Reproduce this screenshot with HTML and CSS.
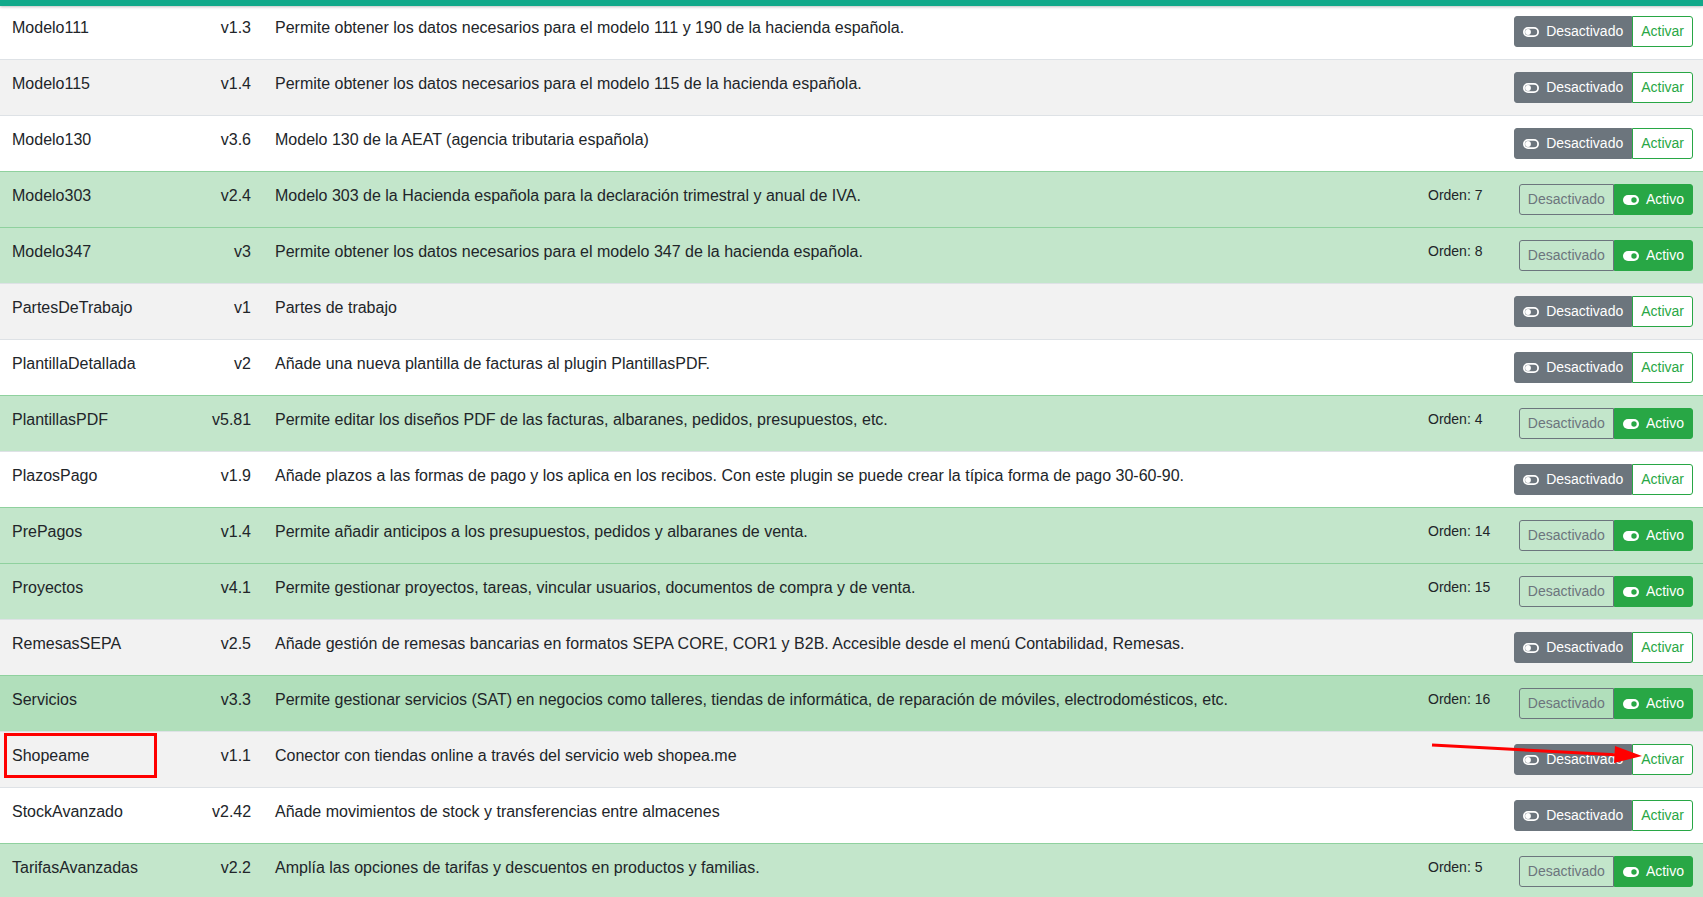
FILE: index.html
```html
<!DOCTYPE html>
<html lang="es">
<head>
    <meta charset="UTF-8">
    <meta name="viewport" content="width=device-width, initial-scale=1.0">
    <title>Plugins</title>
    <link rel="stylesheet" href="styles.css">
</head>
<body>

    <div class="topbar"></div>

    <div class="content">
        <table class="plugins">
            <colgroup>
                <col class="col-name">
                <col class="col-version">
                <col>
                <col class="col-order">
                <col class="col-actions">
            </colgroup>
            <tbody>
                <tr>
                    <td>Modelo111</td>
                    <td class="version">v1.3</td>
                    <td>Permite obtener los datos necesarios para el modelo 111 y 190 de la hacienda española.</td>
                    <td class="order"></td>
                    <td class="actions">
                        <div class="btn-group">
                            <span class="btn btn-secondary"><svg class="toggle" viewBox="0 0 16 10"><rect x="0.9" y="0.9" width="14.2" height="8.2" rx="4.1" fill="none" stroke="#fff" stroke-width="1.8"/><circle cx="5" cy="5" r="2.9" fill="#fff"/></svg>Desactivado</span>
                            <span class="btn btn-outline-success">Activar</span>
                        </div>
                    </td>
                </tr>
                <tr class="striped">
                    <td>Modelo115</td>
                    <td class="version">v1.4</td>
                    <td>Permite obtener los datos necesarios para el modelo 115 de la hacienda española.</td>
                    <td class="order"></td>
                    <td class="actions">
                        <div class="btn-group">
                            <span class="btn btn-secondary"><svg class="toggle" viewBox="0 0 16 10"><rect x="0.9" y="0.9" width="14.2" height="8.2" rx="4.1" fill="none" stroke="#fff" stroke-width="1.8"/><circle cx="5" cy="5" r="2.9" fill="#fff"/></svg>Desactivado</span>
                            <span class="btn btn-outline-success">Activar</span>
                        </div>
                    </td>
                </tr>
                <tr>
                    <td>Modelo130</td>
                    <td class="version">v3.6</td>
                    <td>Modelo 130 de la AEAT (agencia tributaria española)</td>
                    <td class="order"></td>
                    <td class="actions">
                        <div class="btn-group">
                            <span class="btn btn-secondary"><svg class="toggle" viewBox="0 0 16 10"><rect x="0.9" y="0.9" width="14.2" height="8.2" rx="4.1" fill="none" stroke="#fff" stroke-width="1.8"/><circle cx="5" cy="5" r="2.9" fill="#fff"/></svg>Desactivado</span>
                            <span class="btn btn-outline-success">Activar</span>
                        </div>
                    </td>
                </tr>
                <tr class="enabled">
                    <td>Modelo303</td>
                    <td class="version">v2.4</td>
                    <td>Modelo 303 de la Hacienda española para la declaración trimestral y anual de IVA.</td>
                    <td class="order">Orden: 7</td>
                    <td class="actions">
                        <div class="btn-group">
                            <span class="btn btn-outline-secondary">Desactivado</span>
                            <span class="btn btn-success"><svg class="toggle" viewBox="0 0 16 10"><rect x="0" y="0" width="16" height="10" rx="5" fill="#fff"/><circle cx="11" cy="5" r="2.7" fill="#28a745"/></svg>Activo</span>
                        </div>
                    </td>
                </tr>
                <tr class="enabled">
                    <td>Modelo347</td>
                    <td class="version">v3</td>
                    <td>Permite obtener los datos necesarios para el modelo 347 de la hacienda española.</td>
                    <td class="order">Orden: 8</td>
                    <td class="actions">
                        <div class="btn-group">
                            <span class="btn btn-outline-secondary">Desactivado</span>
                            <span class="btn btn-success"><svg class="toggle" viewBox="0 0 16 10"><rect x="0" y="0" width="16" height="10" rx="5" fill="#fff"/><circle cx="11" cy="5" r="2.7" fill="#28a745"/></svg>Activo</span>
                        </div>
                    </td>
                </tr>
                <tr class="striped">
                    <td>PartesDeTrabajo</td>
                    <td class="version">v1</td>
                    <td>Partes de trabajo</td>
                    <td class="order"></td>
                    <td class="actions">
                        <div class="btn-group">
                            <span class="btn btn-secondary"><svg class="toggle" viewBox="0 0 16 10"><rect x="0.9" y="0.9" width="14.2" height="8.2" rx="4.1" fill="none" stroke="#fff" stroke-width="1.8"/><circle cx="5" cy="5" r="2.9" fill="#fff"/></svg>Desactivado</span>
                            <span class="btn btn-outline-success">Activar</span>
                        </div>
                    </td>
                </tr>
                <tr>
                    <td>PlantillaDetallada</td>
                    <td class="version">v2</td>
                    <td>Añade una nueva plantilla de facturas al plugin PlantillasPDF.</td>
                    <td class="order"></td>
                    <td class="actions">
                        <div class="btn-group">
                            <span class="btn btn-secondary"><svg class="toggle" viewBox="0 0 16 10"><rect x="0.9" y="0.9" width="14.2" height="8.2" rx="4.1" fill="none" stroke="#fff" stroke-width="1.8"/><circle cx="5" cy="5" r="2.9" fill="#fff"/></svg>Desactivado</span>
                            <span class="btn btn-outline-success">Activar</span>
                        </div>
                    </td>
                </tr>
                <tr class="enabled">
                    <td>PlantillasPDF</td>
                    <td class="version">v5.81</td>
                    <td>Permite editar los diseños PDF de las facturas, albaranes, pedidos, presupuestos, etc.</td>
                    <td class="order">Orden: 4</td>
                    <td class="actions">
                        <div class="btn-group">
                            <span class="btn btn-outline-secondary">Desactivado</span>
                            <span class="btn btn-success"><svg class="toggle" viewBox="0 0 16 10"><rect x="0" y="0" width="16" height="10" rx="5" fill="#fff"/><circle cx="11" cy="5" r="2.7" fill="#28a745"/></svg>Activo</span>
                        </div>
                    </td>
                </tr>
                <tr>
                    <td>PlazosPago</td>
                    <td class="version">v1.9</td>
                    <td>Añade plazos a las formas de pago y los aplica en los recibos. Con este plugin se puede crear la típica forma de pago 30-60-90.</td>
                    <td class="order"></td>
                    <td class="actions">
                        <div class="btn-group">
                            <span class="btn btn-secondary"><svg class="toggle" viewBox="0 0 16 10"><rect x="0.9" y="0.9" width="14.2" height="8.2" rx="4.1" fill="none" stroke="#fff" stroke-width="1.8"/><circle cx="5" cy="5" r="2.9" fill="#fff"/></svg>Desactivado</span>
                            <span class="btn btn-outline-success">Activar</span>
                        </div>
                    </td>
                </tr>
                <tr class="enabled">
                    <td>PrePagos</td>
                    <td class="version">v1.4</td>
                    <td>Permite añadir anticipos a los presupuestos, pedidos y albaranes de venta.</td>
                    <td class="order">Orden: 14</td>
                    <td class="actions">
                        <div class="btn-group">
                            <span class="btn btn-outline-secondary">Desactivado</span>
                            <span class="btn btn-success"><svg class="toggle" viewBox="0 0 16 10"><rect x="0" y="0" width="16" height="10" rx="5" fill="#fff"/><circle cx="11" cy="5" r="2.7" fill="#28a745"/></svg>Activo</span>
                        </div>
                    </td>
                </tr>
                <tr class="enabled">
                    <td>Proyectos</td>
                    <td class="version">v4.1</td>
                    <td>Permite gestionar proyectos, tareas, vincular usuarios, documentos de compra y de venta.</td>
                    <td class="order">Orden: 15</td>
                    <td class="actions">
                        <div class="btn-group">
                            <span class="btn btn-outline-secondary">Desactivado</span>
                            <span class="btn btn-success"><svg class="toggle" viewBox="0 0 16 10"><rect x="0" y="0" width="16" height="10" rx="5" fill="#fff"/><circle cx="11" cy="5" r="2.7" fill="#28a745"/></svg>Activo</span>
                        </div>
                    </td>
                </tr>
                <tr class="striped">
                    <td>RemesasSEPA</td>
                    <td class="version">v2.5</td>
                    <td>Añade gestión de remesas bancarias en formatos SEPA CORE, COR1 y B2B. Accesible desde el menú Contabilidad, Remesas.</td>
                    <td class="order"></td>
                    <td class="actions">
                        <div class="btn-group">
                            <span class="btn btn-secondary"><svg class="toggle" viewBox="0 0 16 10"><rect x="0.9" y="0.9" width="14.2" height="8.2" rx="4.1" fill="none" stroke="#fff" stroke-width="1.8"/><circle cx="5" cy="5" r="2.9" fill="#fff"/></svg>Desactivado</span>
                            <span class="btn btn-outline-success">Activar</span>
                        </div>
                    </td>
                </tr>
                <tr class="enabled hovered">
                    <td>Servicios</td>
                    <td class="version">v3.3</td>
                    <td>Permite gestionar servicios (SAT) en negocios como talleres, tiendas de informática, de reparación de móviles, electrodomésticos, etc.</td>
                    <td class="order">Orden: 16</td>
                    <td class="actions">
                        <div class="btn-group">
                            <span class="btn btn-outline-secondary">Desactivado</span>
                            <span class="btn btn-success"><svg class="toggle" viewBox="0 0 16 10"><rect x="0" y="0" width="16" height="10" rx="5" fill="#fff"/><circle cx="11" cy="5" r="2.7" fill="#28a745"/></svg>Activo</span>
                        </div>
                    </td>
                </tr>
                <tr class="striped">
                    <td>Shopeame</td>
                    <td class="version">v1.1</td>
                    <td>Conector con tiendas online a través del servicio web shopea.me</td>
                    <td class="order"></td>
                    <td class="actions">
                        <div class="btn-group">
                            <span class="btn btn-secondary"><svg class="toggle" viewBox="0 0 16 10"><rect x="0.9" y="0.9" width="14.2" height="8.2" rx="4.1" fill="none" stroke="#fff" stroke-width="1.8"/><circle cx="5" cy="5" r="2.9" fill="#fff"/></svg>Desactivado</span>
                            <span class="btn btn-outline-success">Activar</span>
                        </div>
                    </td>
                </tr>
                <tr>
                    <td>StockAvanzado</td>
                    <td class="version">v2.42</td>
                    <td>Añade movimientos de stock y transferencias entre almacenes</td>
                    <td class="order"></td>
                    <td class="actions">
                        <div class="btn-group">
                            <span class="btn btn-secondary"><svg class="toggle" viewBox="0 0 16 10"><rect x="0.9" y="0.9" width="14.2" height="8.2" rx="4.1" fill="none" stroke="#fff" stroke-width="1.8"/><circle cx="5" cy="5" r="2.9" fill="#fff"/></svg>Desactivado</span>
                            <span class="btn btn-outline-success">Activar</span>
                        </div>
                    </td>
                </tr>
                <tr class="enabled">
                    <td>TarifasAvanzadas</td>
                    <td class="version">v2.2</td>
                    <td>Amplía las opciones de tarifas y descuentos en productos y familias.</td>
                    <td class="order">Orden: 5</td>
                    <td class="actions">
                        <div class="btn-group">
                            <span class="btn btn-outline-secondary">Desactivado</span>
                            <span class="btn btn-success"><svg class="toggle" viewBox="0 0 16 10"><rect x="0" y="0" width="16" height="10" rx="5" fill="#fff"/><circle cx="11" cy="5" r="2.7" fill="#28a745"/></svg>Activo</span>
                        </div>
                    </td>
                </tr>
            </tbody>
        </table>

        <!-- marcas de la captura -->
        <div class="mark-box"></div>
        <svg class="mark-arrow" width="230" height="30" viewBox="0 0 230 30">
            <line x1="2" y1="3" x2="190" y2="13" stroke="#f00" stroke-width="3"/>
            <polygon points="185,4 212,14 184,21" fill="#f00"/>
        </svg>
    </div>

</body>
</html>
```

FILE: styles.css
```css
body {
    margin: 0;
    font-family: "Liberation Sans", Arial, sans-serif;
    font-size: 16px;
    color: #212529;
    background: #fff;
}

.topbar {
    position: fixed;
    top: 0;
    left: 0;
    right: 0;
    height: 6px;
    background: #11a98a;
    box-shadow: 0 1px 3px rgba(0, 0, 0, 0.25);
    z-index: 10;
}

.content {
    position: relative;
    padding-top: 3px;
}

.plugins {
    width: 100%;
    border-collapse: collapse;
    table-layout: fixed;
}

.col-name {
    width: 200px;
}

.col-version {
    width: 63px;
}

.col-order {
    width: 82px;
}

.col-actions {
    width: 205px;
}

.plugins td {
    padding: 12px;
    line-height: 24px;
    vertical-align: top;
    border-top: 1px solid #dee2e6;
    white-space: nowrap;
    overflow: hidden;
}

.plugins td.version {
    text-align: right;
}

.plugins td.order {
    font-size: 14px;
    line-height: 22px;
}

.plugins td.actions {
    text-align: right;
    padding-right: 10px;
}

.plugins tr.striped {
    background: #f2f2f2;
}

.plugins tr.enabled {
    background: #c3e6cb;
}

.plugins tr.enabled td {
    border-top-color: #8fd19e;
}

.plugins tr.hovered {
    background: #b1dfbb;
}

.btn-group {
    display: inline-flex;
    vertical-align: top;
}

.btn {
    display: inline-flex;
    align-items: center;
    font-size: 14px;
    line-height: 21px;
    padding: 4px 8px;
    border: 1px solid transparent;
}

.btn:first-child {
    border-radius: 3px 0 0 3px;
}

.btn:last-child {
    border-radius: 0 3px 3px 0;
}

.btn-secondary {
    background: #6c757d;
    border-color: #6c757d;
    color: #fff;
}

.btn-outline-secondary {
    border-color: #6c757d;
    color: #6c757d;
}

.btn-success {
    background: #28a745;
    border-color: #28a745;
    color: #fff;
}

.btn-outline-success {
    background: #fff;
    border-color: #28a745;
    color: #28a745;
}

.toggle {
    width: 16px;
    height: 10px;
    margin-right: 7px;
}

.mark-box {
    position: absolute;
    left: 4px;
    top: 733px;
    width: 147px;
    height: 39px;
    border: 3px solid #f00;
}

.mark-arrow {
    position: absolute;
    left: 1430px;
    top: 742px;
}
```
